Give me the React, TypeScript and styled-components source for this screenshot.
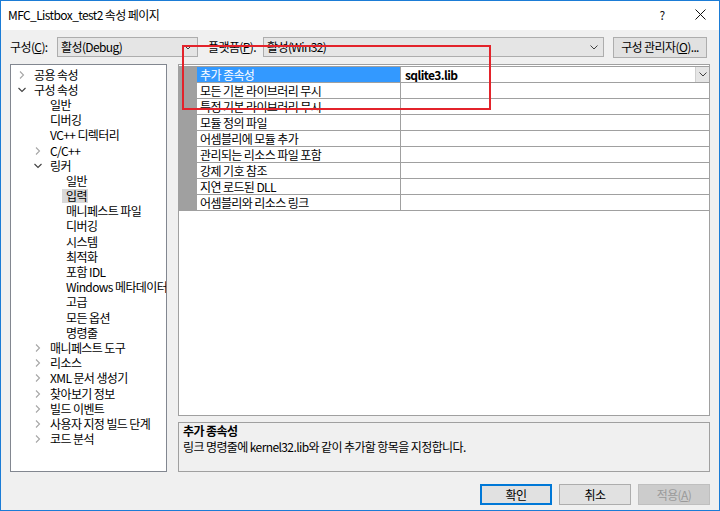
import React from 'react';
import styled, { createGlobalStyle } from 'styled-components';

const GlobalStyle = createGlobalStyle`
  html, body {
    margin: 0;
    padding: 0;
    background: #ffffff;
  }
  body {
    font-family: "Noto Sans CJK KR", "Noto Sans", sans-serif;
    font-size: 12px;
    letter-spacing: -0.6px;
    color: #000;
  }
  * {
    box-sizing: border-box;
  }
`;

const Window = styled.div`
  position: relative;
  width: 720px;
  height: 511px;
  border: 1px solid #1b7cd6;
  background: #f0f0f0;
  display: flex;
  flex-direction: column;
  overflow: hidden;
`;

const TitleBar = styled.div`
  height: 29px;
  background: #ffffff;
  display: flex;
  align-items: center;
  padding: 0 0 2px 7px;
`;

const TitleText = styled.div`
  flex: 1;
  font-size: 12px;
  line-height: 16px;
`;

const TitleButton = styled.div<{ $width: number }>`
  width: ${(p) => p.$width}px;
  height: 26px;
  display: flex;
  align-items: center;
  justify-content: center;
  font-size: 12px;
  color: #111;
`;

const Body = styled.div`
  flex: 1;
  display: flex;
  flex-direction: column;
  padding: 6px 9px 0 9px;
`;

const TopRow = styled.div`
  height: 22px;
  display: flex;
  align-items: center;
`;

const Label = styled.div<{ $width: number; $gap?: number }>`
  width: ${(p) => p.$width}px;
  margin-left: ${(p) => p.$gap || 0}px;
  line-height: 16px;
  white-space: nowrap;
`;

const Combo = styled.div<{ $width: number }>`
  width: ${(p) => p.$width}px;
  height: 20px;
  background: #e5e5e5;
  border: 1px solid #adadad;
  display: flex;
  align-items: center;
  padding: 0 5px 0 3px;
  line-height: 16px;
`;

const ComboText = styled.span`
  flex: 1;
`;

const PushButton = styled.div<{ $width: number; $kind?: 'default' | 'disabled'; $gap?: number }>`
  width: ${(p) => p.$width}px;
  height: 21px;
  margin-left: ${(p) => p.$gap || 0}px;
  display: flex;
  align-items: center;
  justify-content: center;
  line-height: 16px;
  background: ${(p) => (p.$kind === 'disabled' ? '#cccccc' : '#e1e1e1')};
  border: 1px solid
    ${(p) => (p.$kind === 'default' ? '#0078d7' : p.$kind === 'disabled' ? '#bfbfbf' : '#adadad')};
  box-shadow: ${(p) => (p.$kind === 'default' ? 'inset 0 0 0 1px #0078d7' : 'none')};
  color: ${(p) => (p.$kind === 'disabled' ? '#9a9a9a' : '#000')};
  white-space: nowrap;
`;

const Main = styled.div`
  margin-top: 6px;
  height: 408px;
  display: flex;
  gap: 11px;
`;

const TreePanel = styled.div`
  width: 157px;
  background: #ffffff;
  border: 1px solid #828790;
  padding-top: 2px;
  overflow: hidden;
`;

const TreeRow = styled.div<{ $level: number }>`
  height: 15.2px;
  display: flex;
  align-items: center;
  padding-left: ${(p) => 5 + p.$level * 16}px;
  white-space: nowrap;
`;

const ArrowSlot = styled.span`
  width: 18px;
  height: 15px;
  display: flex;
  align-items: center;
  padding-left: 2px;
  flex-shrink: 0;
`;

const TreeLabel = styled.span<{ $selected?: boolean }>`
  line-height: 14px;
  height: 14px;
  margin-left: ${(p) => (p.$selected ? '-4px' : '0')};
  padding: ${(p) => (p.$selected ? '0 1px 0 4px' : '0')};
  background: ${(p) => (p.$selected ? '#d9d9d9' : 'transparent')};
`;

const RightColumn = styled.div`
  width: 532px;
  display: flex;
  flex-direction: column;
  gap: 6px;
`;

const GridPanel = styled.div`
  height: 352px;
  background: #ffffff;
  border: 1px solid #a0a0a0;
  padding-top: 1px;
`;

const GridRow = styled.div<{ $last?: boolean }>`
  height: ${(p) => (p.$last ? 17 : 16)}px;
  display: flex;
`;

const Strip = styled.div`
  width: 18px;
  background: #a0a0a0;
  flex-shrink: 0;
`;

const NameCell = styled.div<{ $selected?: boolean; $last?: boolean }>`
  width: 204px;
  border-top: 1px solid #a0a0a0;
  border-bottom: ${(p) => (p.$last ? '1px solid #a0a0a0' : 'none')};
  border-right: 1px solid #a0a0a0;
  background: ${(p) => (p.$selected ? '#3399ff' : '#ffffff')};
  color: ${(p) => (p.$selected ? '#ffffff' : '#000')};
  padding-left: 3px;
  line-height: 15px;
  white-space: nowrap;
`;

const ValueCell = styled.div<{ $last?: boolean }>`
  flex: 1;
  border-top: 1px solid #a0a0a0;
  border-bottom: ${(p) => (p.$last ? '1px solid #a0a0a0' : 'none')};
  display: flex;
  align-items: stretch;
  padding-left: 4px;
  line-height: 15px;
`;

const ValueText = styled.span`
  flex: 1;
  font-weight: bold;
`;

const DropButton = styled.div`
  width: 14px;
  background: #e5e5e5;
  border-left: 1px solid #cfcfcf;
  display: flex;
  align-items: center;
  justify-content: center;
`;

const DescPanel = styled.div`
  height: 50px;
  border: 1px solid #a0a0a0;
  background: #f0f0f0;
  padding: 0 4px;
`;

const DescTitle = styled.div`
  font-weight: bold;
  line-height: 16px;
`;

const DescText = styled.div`
  line-height: 16px;
`;

const Footer = styled.div`
  margin-top: 12px;
  display: flex;
  justify-content: flex-end;
  gap: 7px;
`;

const Annotation = styled.div`
  position: absolute;
  left: 181px;
  top: 44px;
  width: 309px;
  height: 65px;
  border: 2px solid #e3232b;
  pointer-events: none;
`;

const Chevron = ({ color = '#404040' }: { color?: string }) => (
  <svg width="8" height="5" viewBox="0 0 8 5">
    <path d="M0.5 0.5 L4 4 L7.5 0.5" fill="none" stroke={color} strokeWidth="1" />
  </svg>
);

const TreeArrow = ({ open }: { open: boolean }) =>
  open ? (
    <svg width="8" height="6" viewBox="0 0 8 6">
      <path d="M0.5 1 L4 4.5 L7.5 1" fill="none" stroke="#404040" strokeWidth="1.1" />
    </svg>
  ) : (
    <svg width="8" height="8" viewBox="0 0 8 8">
      <path d="M2 0.5 L5.5 4 L2 7.5" fill="none" stroke="#a6a6a6" strokeWidth="1.1" />
    </svg>
  );

const CloseIcon = () => (
  <svg width="11" height="11" viewBox="0 0 11 11">
    <path d="M0.5 0.5 L10.5 10.5 M10.5 0.5 L0.5 10.5" stroke="#111" strokeWidth="1" />
  </svg>
);

interface TreeItem {
  label: string;
  level: number;
  arrow?: 'open' | 'closed';
  selected?: boolean;
}

const treeItems: TreeItem[] = [
  { label: '공용 속성', level: 0, arrow: 'closed' },
  { label: '구성 속성', level: 0, arrow: 'open' },
  { label: '일반', level: 1 },
  { label: '디버깅', level: 1 },
  { label: 'VC++ 디렉터리', level: 1 },
  { label: 'C/C++', level: 1, arrow: 'closed' },
  { label: '링커', level: 1, arrow: 'open' },
  { label: '일반', level: 2 },
  { label: '입력', level: 2, selected: true },
  { label: '매니페스트 파일', level: 2 },
  { label: '디버깅', level: 2 },
  { label: '시스템', level: 2 },
  { label: '최적화', level: 2 },
  { label: '포함 IDL', level: 2 },
  { label: 'Windows 메타데이터', level: 2 },
  { label: '고급', level: 2 },
  { label: '모든 옵션', level: 2 },
  { label: '명령줄', level: 2 },
  { label: '매니페스트 도구', level: 1, arrow: 'closed' },
  { label: '리소스', level: 1, arrow: 'closed' },
  { label: 'XML 문서 생성기', level: 1, arrow: 'closed' },
  { label: '찾아보기 정보', level: 1, arrow: 'closed' },
  { label: '빌드 이벤트', level: 1, arrow: 'closed' },
  { label: '사용자 지정 빌드 단계', level: 1, arrow: 'closed' },
  { label: '코드 분석', level: 1, arrow: 'closed' },
];

const properties = [
  { name: '추가 종속성', value: 'sqlite3.lib' },
  { name: '모든 기본 라이브러리 무시', value: '' },
  { name: '특정 기본 라이브러리 무시', value: '' },
  { name: '모듈 정의 파일', value: '' },
  { name: '어셈블리에 모듈 추가', value: '' },
  { name: '관리되는 리소스 파일 포함', value: '' },
  { name: '강제 기호 참조', value: '' },
  { name: '지연 로드된 DLL', value: '' },
  { name: '어셈블리와 리소스 링크', value: '' },
];

const App: React.FC = () => {
  const selectedIndex = 0;

  return (
    <>
      <GlobalStyle />
      <Window>
        <TitleBar>
          <TitleText>MFC_Listbox_test2 속성 페이지</TitleText>
          <TitleButton $width={38}>?</TitleButton>
          <TitleButton $width={38}>
            <CloseIcon />
          </TitleButton>
        </TitleBar>

        <Body>
          <TopRow>
            <Label $width={47}>
              구성(<u>C</u>):
            </Label>
            <Combo $width={141}>
              <ComboText>활성(Debug)</ComboText>
              <Chevron />
            </Combo>
            <Label $width={55} $gap={10}>
              플랫폼(<u>P</u>):
            </Label>
            <Combo $width={341}>
              <ComboText>활성(Win32)</ComboText>
              <Chevron />
            </Combo>
            <PushButton $width={94} $gap={9}>
              구성 관리자(<u>O</u>)...
            </PushButton>
          </TopRow>

          <Main>
            <TreePanel>
              {treeItems.map((item, i) => (
                <TreeRow key={i} $level={item.level}>
                  <ArrowSlot>{item.arrow && <TreeArrow open={item.arrow === 'open'} />}</ArrowSlot>
                  <TreeLabel $selected={item.selected}>{item.label}</TreeLabel>
                </TreeRow>
              ))}
            </TreePanel>

            <RightColumn>
              <GridPanel>
                {properties.map((prop, i) => {
                  const last = i === properties.length - 1;
                  const selected = i === selectedIndex;
                  return (
                    <GridRow key={prop.name} $last={last}>
                      <Strip />
                      <NameCell $selected={selected} $last={last}>
                        {prop.name}
                      </NameCell>
                      <ValueCell $last={last}>
                        <ValueText>{prop.value}</ValueText>
                        {selected && (
                          <DropButton>
                            <Chevron />
                          </DropButton>
                        )}
                      </ValueCell>
                    </GridRow>
                  );
                })}
              </GridPanel>

              <DescPanel>
                <DescTitle>추가 종속성</DescTitle>
                <DescText>링크 명령줄에 kernel32.lib와 같이 추가할 항목을 지정합니다.</DescText>
              </DescPanel>
            </RightColumn>
          </Main>

          <Footer>
            <PushButton $width={72} $kind="default">
              확인
            </PushButton>
            <PushButton $width={72}>취소</PushButton>
            <PushButton $width={72} $kind="disabled">
              적용(<u>A</u>)
            </PushButton>
          </Footer>
        </Body>

        <Annotation />
      </Window>
    </>
  );
};

export default App;
